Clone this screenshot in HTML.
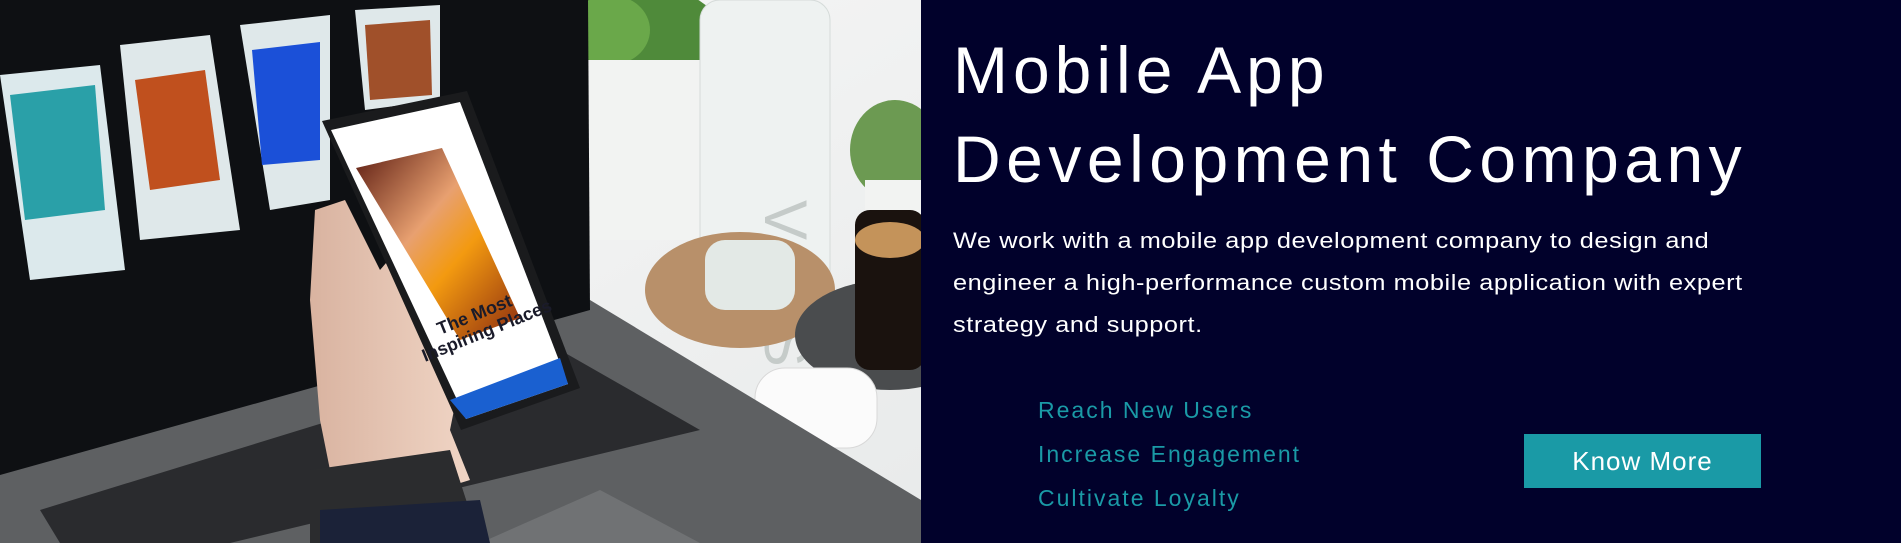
<!DOCTYPE html>
<html><head><meta charset="utf-8"><style>
html,body{margin:0;padding:0}
body{width:1901px;height:543px;overflow:hidden;position:relative;background:#01012b;font-family:"Liberation Sans",sans-serif}
.left{position:absolute;left:0;top:0;width:921px;height:543px;overflow:hidden;background:#f4f5f4}
.t{position:absolute;white-space:nowrap;color:#fff;transform-origin:0 0}
</style></head><body>
<div class="left">
<svg width="921" height="543" viewBox="0 0 921 543" xmlns="http://www.w3.org/2000/svg">
<defs>
<linearGradient id="desk" x1="0" y1="0" x2="1" y2="1"><stop offset="0" stop-color="#fafafa"/><stop offset="1" stop-color="#e8eaea"/></linearGradient>
<linearGradient id="orng" x1="0" y1="0" x2="1" y2="1"><stop offset="0" stop-color="#5a1a10"/><stop offset="0.4" stop-color="#e8a070"/><stop offset="0.6" stop-color="#f39a10"/><stop offset="1" stop-color="#8a2a10"/></linearGradient>
<linearGradient id="skin" x1="0" y1="0" x2="1" y2="0"><stop offset="0" stop-color="#d9b3a0"/><stop offset="1" stop-color="#f0d5c5"/></linearGradient>
</defs>
<rect width="921" height="543" fill="url(#desk)"/>
<ellipse cx="640" cy="40" rx="85" ry="55" fill="#4f8a3a"/>
<ellipse cx="610" cy="30" rx="40" ry="35" fill="#6aa84a"/>
<rect x="565" y="60" width="150" height="180" rx="10" fill="#f2f3f2"/>
<rect x="700" y="0" width="130" height="320" rx="20" fill="#eef2f1" stroke="#d5dbd9"/>
<text x="765" y="200" font-size="60" fill="#c5cbc9" transform="rotate(90 765 200)" font-family="Liberation Sans">VOSS</text>
<ellipse cx="740" cy="290" rx="95" ry="58" fill="#b8906a"/>
<rect x="705" y="240" width="90" height="70" rx="20" fill="#e3e9e6"/>
<ellipse cx="895" cy="150" rx="45" ry="50" fill="#6c9a52"/>
<rect x="865" y="180" width="60" height="40" fill="#f2f3f2"/>
<ellipse cx="890" cy="335" rx="95" ry="55" fill="#4a4c4e"/>
<rect x="855" y="210" width="70" height="160" rx="15" fill="#1a120e"/>
<ellipse cx="890" cy="240" rx="35" ry="18" fill="#c4935a"/>
<rect x="755" y="368" width="122" height="80" rx="30" fill="#fbfbfb" stroke="#d8d8d8"/>
<polygon points="0,470 590,300 921,500 921,543 0,543" fill="#5e6062"/>
<polygon points="40,510 560,350 700,430 230,543 60,543" fill="#2a2b2e"/>
<polygon points="480,543 600,490 700,543" fill="#707274"/>
<polygon points="0,0 588,0 590,310 0,475" fill="#0e1013"/>
<polygon points="0,75 100,65 125,270 30,280" fill="#dce9ec"/>
<polygon points="10,95 95,85 105,210 25,220" fill="#2aa0a8"/>
<polygon points="120,45 210,35 240,230 140,240" fill="#dfe8ea"/>
<polygon points="135,80 205,70 220,180 150,190" fill="#c0501e"/>
<polygon points="240,25 330,15 330,200 270,210" fill="#dfe8ea"/>
<polygon points="252,50 320,42 320,160 262,165" fill="#1b50d8"/>
<polygon points="355,10 440,5 440,100 365,110" fill="#dfe8ea"/>
<polygon points="365,25 430,20 432,95 370,100" fill="#a0502a"/>
<polygon points="315,210 345,200 380,270 440,200 470,260 470,330 450,430 470,480 340,520 320,420 310,300" fill="url(#skin)"/>
<polygon points="322,121 467,91 580,388 461,430" fill="#1a1b1d"/>
<polygon points="331,130 460,102 568,384 466,419" fill="#ffffff"/>
<polygon points="356,168 442,148 520,318 460,340" fill="url(#orng)"/>
<text x="440" y="335" font-size="18" font-weight="bold" fill="#1a1b2a" transform="rotate(-22 440 335)">The Most</text>
<text x="425" y="362" font-size="18" font-weight="bold" fill="#1a1b2a" transform="rotate(-22 425 362)">Inspiring Places</text>
<polygon points="450,400 560,358 568,384 466,419" fill="#1a60d0"/>
<polygon points="310,470 450,450 480,543 310,543" fill="#2b2c2e"/>
<polygon points="320,510 480,500 490,543 320,543" fill="#1b2238"/>
</svg>
</div>
<div class="t" style="left:953px;top:26px;font-size:66px;letter-spacing:5px;line-height:89px">Mobile App</div>
<div class="t" style="left:953px;top:115px;font-size:66px;letter-spacing:5.5px;line-height:89px">Development Company</div>
<div class="t" style="left:953px;top:220px;font-size:22px;line-height:42px;letter-spacing:0.5px;transform:scaleX(1.15)">We work with a mobile app development company to design and<br>engineer a high-performance custom mobile application with expert<br>strategy and support.</div>
<div class="t" style="left:1038px;top:388px;font-size:23px;line-height:44px;color:#1a9aa6;letter-spacing:2px">Reach New Users<br>Increase Engagement<br>Cultivate Loyalty</div>
<div style="position:absolute;left:1524px;top:434px;width:237px;height:54px;background:#1a9aa6;color:#fff;font-size:26px;line-height:54px;text-align:center;letter-spacing:1px">Know More</div>
</body></html>
